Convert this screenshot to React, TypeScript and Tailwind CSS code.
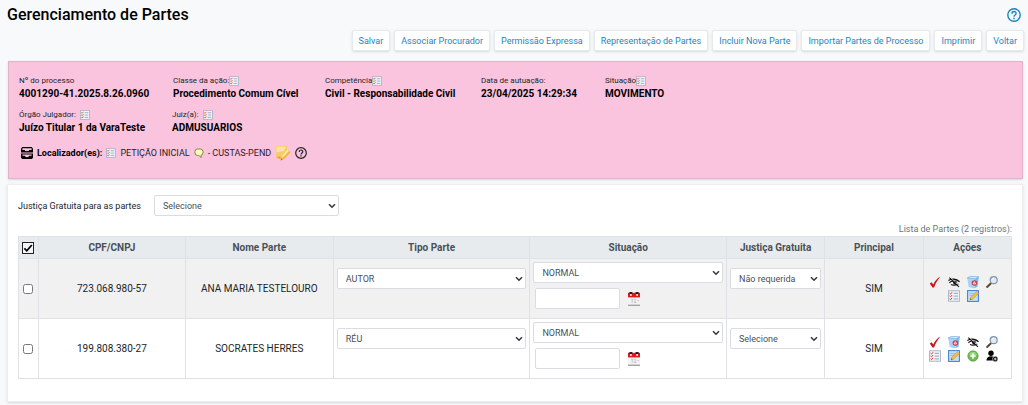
import React, { useState } from "react";

type IconProps = { className?: string };

const ListIcon = ({ className = "size-3" }: IconProps) => (
  <svg viewBox="0 0 12 12" className={className} aria-hidden="true">
    <rect x="0.6" y="0.8" width="10.8" height="10.4" fill="#f3f7fb" stroke="#a4adba" strokeWidth="0.9" />
    <path d="M5.6 3.3h4.4M5.6 6.1h4.4M5.6 8.9h4.4" stroke="#8aa0bd" strokeWidth="1" />
    <path d="M1.6 3.2l1 .9 1.5-1.9M1.6 6l1 .9 1.5-1.9M1.6 8.8l1 .9 1.5-1.9" stroke="#d93a30" strokeWidth="1" fill="none" />
  </svg>
);

const CheckIcon = () => (
  <svg viewBox="0 0 12 12" className="size-3" aria-hidden="true">
    <path d="M.8 7.4 2.6 6.2 4.3 8.4C5.8 5.2 8 2.6 11.4 .6 8.8 3.8 6.6 7.2 5.1 11.4H3.5Z" fill="#cc1419" />
  </svg>
);

const EyeOffIcon = () => (
  <svg viewBox="0 0 12 12" className="size-3" aria-hidden="true">
    <path d="M.4 4.6C3.4 2.4 8.2 2.8 11.6 5.8" fill="none" stroke="#111" strokeWidth="1.3" />
    <path d="M1.4 6.8C3 4.8 6 4.6 9 6.4M3 8.6C5 9.4 8 9.2 10.4 8" fill="none" stroke="#111" strokeWidth="1.1" />
    <path d="M4.6 5.2 8.6 5.6 8 8.4 5.6 8Z" fill="#111" />
    <path d="M1.4 1.6 11 10.8" stroke="#111" strokeWidth="1.1" />
    <path d="M2.4 1.4 11.6 10" stroke="#f4f4f4" strokeWidth="0.5" />
  </svg>
);

const TrashIcon = () => (
  <svg viewBox="0 0 12 12" className="size-3" aria-hidden="true">
    <path d="M.4 1.8 3.4 .5 11.8 .8 10.6 10.6 8 11.9 2 11Z" fill="#7db9ee" />
    <path d="M.4 1.8 8.4 2.8 8 11.9 2 11Z" fill="#a9d3f7" />
    <path d="M.4 1.8 3.4 .5 11.8 .8 8.4 2.8Z" fill="#dff0fd" stroke="#5d9fdb" strokeWidth="0.5" />
    <circle cx="7.4" cy="7" r="2.8" fill="#cf3c4a" />
    <path d="M6.1 7.9 7.4 5.6 8.7 7.9Z" fill="none" stroke="#fff" strokeWidth="0.8" />
  </svg>
);

const SearchIcon = () => (
  <svg viewBox="0 0 12 12" className="size-3" aria-hidden="true">
    <path d="M5 7.2 1.1 10.9" stroke="#5f4636" strokeWidth="2" strokeLinecap="round" />
    <circle cx="7.7" cy="4.2" r="3.5" fill="#dbe9f8" stroke="#8793a5" strokeWidth="1.2" />
    <path d="M6 4A1.8 1.8 0 0 1 7.9 2.3" fill="none" stroke="#fff" strokeWidth="0.9" />
  </svg>
);

const EditIcon = () => (
  <svg viewBox="0 0 12 12" className="size-3" aria-hidden="true">
    <rect x="0.6" y="0.6" width="10.8" height="10.8" fill="#c4defa" stroke="#3f7ccb" strokeWidth="1" />
    <path d="M2.4 3.4h5M2.4 5.4h3.4" stroke="#8bb6e6" strokeWidth="0.8" />
    <path d="M3 9.8 3.6 7.3 9.6 1.4 11.7 3.4 5.6 9.3Z" fill="#f5bc45" stroke="#b8853c" strokeWidth="0.4" />
    <path d="M3 9.8 3.4 8.2 4.6 9.4Z" fill="#444" />
  </svg>
);

const AddIcon = () => (
  <svg viewBox="0 0 12 12" className="size-3" aria-hidden="true">
    <circle cx="6" cy="6" r="5.2" fill="#72bb55" stroke="#559c40" strokeWidth="0.7" />
    <path d="M2 5A4.2 4.2 0 0 1 10 5Z" fill="#9bd583" />
    <path d="M6 3.2v5.6M3.2 6h5.6" stroke="#fff" strokeWidth="1.6" />
  </svg>
);

const PersonAddIcon = () => (
  <svg viewBox="0 0 12 12" className="size-3" aria-hidden="true">
    <circle cx="5" cy="3.2" r="2.7" fill="#000" />
    <path d="M.4 10.5C.4 7.8 2.6 6.3 5 6.3S9 7.6 9.4 10.5Z" fill="#000" />
    <circle cx="9.2" cy="9" r="2.7" fill="#000" stroke="#fff" strokeWidth="0.5" />
    <path d="M9.2 7.6v2.8M7.8 9h2.8" stroke="#fff" strokeWidth="0.8" />
  </svg>
);

const CalendarIcon = () => (
  <svg viewBox="0 0 12 14" className="h-3.5 w-3" aria-hidden="true">
    <path d="M0 5H12V13.4H0Z" fill="#f3f3f3" />
    <path d="M0 12.6H12V14H0Z" fill="#a3a3a3" />
    <path d="M0 .8H12V5.4H0Z" fill="#d91a1d" />
    <path d="M1.4 0h3v2H1.4ZM7.6 0h3v2H7.6Z" fill="#35191a" />
    <path d="M2.2 2.1h1.4v1.9H2.2ZM8.4 2.1h1.4v1.9H8.4Z" fill="#fff" />
    <path d="M3.3 7.2 4.2 6.8V10.8M6 7.4C7.8 6.4 8 8.2 6.2 10.4H8.4M9.6 8.6H11" fill="none" stroke="#b4b4b4" strokeWidth="0.8" />
  </svg>
);

const InboxIcon = () => (
  <svg viewBox="0 0 12 12" className="size-3" aria-hidden="true">
    <path d="M1.4 0H10.6L12 1.4V5.4H0V1.4Z" fill="#000" />
    <path d="M1.4 1.2H10.6V3H8.2C8 4.6 4 4.6 3.8 3H1.4Z" fill="#fac4df" />
    <path d="M0 6.6H12V10.8L10.8 12H1.2L0 10.8Z" fill="#000" />
    <path d="M1.4 7.6H10.6V8.8H8.2C8 10.6 4 10.6 3.8 8.8H1.4Z" fill="#fac4df" />
  </svg>
);

const BalloonIcon = () => (
  <svg viewBox="0 0 10 10" className="size-2.5" aria-hidden="true">
    <path d="M3.4 1H6.6A2.6 2.6 0 0 1 9 3.4V4.8A2.4 2.4 0 0 1 7 7.2L7.2 9.6 4.8 7.4H3.4A2.4 2.4 0 0 1 1 5V3.4A2.4 2.4 0 0 1 3.4 1Z" fill="#fafbb4" stroke="#66702f" strokeWidth="0.8" />
  </svg>
);

const NoteIcon = () => (
  <svg viewBox="0 0 16 16" className="size-4" aria-hidden="true">
    <path d="M.8 1.2 12 .6 12.8 10 5.4 14 1 12.4Z" fill="#f9c96a" />
    <path d="M1.4 1.8 11.4 1.4 9 6 1.6 7.6Z" fill="#fde3a4" />
    <path d="M1 12.4 5.4 11.2 5.4 14Z" fill="#e9a13c" />
    <path d="M5.6 15.6 6.6 11.4 12.4 4.8 15.6 7.2 9.4 13.8Z" fill="#f2b53d" />
    <path d="M6.6 11.4 12.4 4.8 13.8 6 7.8 12.6Z" fill="#fff1b5" />
    <path d="M5.6 15.6 6.2 13.2 7.6 14.6Z" fill="#a47335" />
  </svg>
);

const HelpIcon = ({ className = "" }: IconProps) => (
  <svg viewBox="0 0 14 14" className={className} fill="none" stroke="currentColor" aria-hidden="true">
    <circle cx="7" cy="7" r="6.2" strokeWidth="1.4" />
    <path d="M4.9 5.7C4.9 2.8 9.1 2.9 9.1 5.4 9.1 7 7 7 7 8.7" strokeWidth="1.4" />
    <path d="M7 9.7V11.2" strokeWidth="1.5" />
  </svg>
);

const actions = {
  check: { label: "Selecionar", icon: <CheckIcon /> },
  hide: { label: "Ocultar", icon: <EyeOffIcon /> },
  trash: { label: "Excluir", icon: <TrashIcon /> },
  search: { label: "Consultar", icon: <SearchIcon /> },
  list: { label: "Listar", icon: <ListIcon /> },
  edit: { label: "Editar", icon: <EditIcon /> },
  add: { label: "Adicionar", icon: <AddIcon /> },
  person: { label: "Adicionar pessoa", icon: <PersonAddIcon /> },
};
type ActionKey = keyof typeof actions;

const toolbar = [
  "Salvar",
  "Associar Procurador",
  "Permissão Expressa",
  "Representação de Partes",
  "Incluir Nova Parte",
  "Importar Partes de Processo",
  "Imprimir",
  "Voltar",
];

type Party = {
  doc: string;
  name: string;
  type: string;
  status: string;
  free: string;
  main: string;
  actions: ActionKey[][];
};

const parties: Party[] = [
  {
    doc: "723.068.980-57",
    name: "ANA MARIA TESTELOURO",
    type: "AUTOR",
    status: "NORMAL",
    free: "Não requerida",
    main: "SIM",
    actions: [["check", "hide", "trash", "search"], ["list", "edit"]],
  },
  {
    doc: "199.808.380-27",
    name: "SOCRATES HERRES",
    type: "RÉU",
    status: "NORMAL",
    free: "Selecione",
    main: "SIM",
    actions: [["check", "trash", "hide", "search"], ["list", "edit", "add", "person"]],
  },
];

function SelectBox({ id, label, value, options }: { id: string; label?: string; value: string; options: string[] }) {
  return (
    <div className="relative w-full">
      <select
        id={id}
        aria-label={label}
        defaultValue={value}
        className="block h-[21px] w-full appearance-none rounded-xs border border-[#d9dde2] bg-white pr-5 pl-2 text-[9px] leading-[18px] text-[#495057]"
      >
        {options.map((o) => (
          <option key={o}>{o}</option>
        ))}
      </select>
      <svg viewBox="0 0 8 6" className="pointer-events-none absolute top-2 right-[3px] h-1.5 w-2" aria-hidden="true">
        <path d="M1 1.2 4 4.2 7 1.2" fill="none" stroke="#343a40" strokeWidth="1.6" />
      </svg>
    </div>
  );
}

function Field({ label, value, icon, spaced }: { label: string; value: string; icon?: boolean; spaced?: boolean }) {
  return (
    <div className="whitespace-nowrap">
      <dt className={`flex h-[13px] items-center text-[8px] text-[#212529] ${spaced ? "gap-1" : ""}`}>
        {label}
        {icon && <ListIcon className="size-2.5" />}
      </dt>
      <dd className="h-3.5 text-[10px] leading-[14px] font-bold text-black">{value}</dd>
    </div>
  );
}

const th = "border border-[#dee2e6] p-0 text-center font-bold";
const td = "border border-[#dee2e6] p-0 text-center";

export default function App() {
  const [selected, setSelected] = useState<boolean[]>([false, false]);
  const [all, setAll] = useState(true);

  return (
    <div className="min-h-screen bg-[#f8f9fb] pb-1 font-['Roboto',sans-serif] text-[9px] leading-3 text-[#212529]">
      <header className="flex h-[30px] items-center justify-between px-[7px]">
        <h1 className="text-base font-medium text-black">Gerenciamento de Partes</h1>
        <button type="button" aria-label="Ajuda" className="text-[#1c86c5]">
          <HelpIcon className="size-3.5" />
        </button>
      </header>

      <nav aria-label="Ações" className="flex justify-end gap-1 pr-1">
        {toolbar.map((t) => (
          <button
            key={t}
            type="button"
            className="h-[21px] rounded-xs border border-[#e6e9ed] bg-white px-1.5 whitespace-nowrap text-[#1a86c4] shadow-sm"
          >
            {t}
          </button>
        ))}
      </nav>

      <section className="mt-2.5 mr-[5px] ml-2 h-[118px] border border-[#dfb3c8] bg-[#fac4df] px-2.5 pt-3 shadow-sm">
        <dl className="grid grid-cols-[154fr_152fr_156fr_124fr_407fr]">
          <Field label="Nº do processo" value="4001290-41.2025.8.26.0960" />
          <Field label="Classe da ação:" value="Procedimento Comum Cível" icon />
          <Field label="Competência" value="Civil - Responsabilidade Civil" icon />
          <Field label="Data de autuação:" value="23/04/2025 14:29:34" />
          <Field label="Situação" value="MOVIMENTO" icon />
        </dl>
        <dl className="mt-[7px] grid grid-cols-[153fr_840fr]">
          <Field label="Órgão Julgador:" value="Juízo Titular 1 da VaraTeste" icon spaced />
          <Field label="Juiz(a):" value="ADMUSUARIOS" icon spaced />
        </dl>
        <div className="mt-2.5 flex h-4 items-center gap-1 pl-0.5">
          <InboxIcon />
          <span className="font-bold text-black">Localizador(es):</span>
          <ListIcon className="size-2.5" />
          <span>PETIÇÃO INICIAL</span>
          <BalloonIcon />
          <span>- CUSTAS-PEND</span>
          <NoteIcon />
          <HelpIcon className="size-3" />
        </div>
      </section>

      <main className="mt-[5px] mr-[5px] ml-[7px] border border-[#eceef0] bg-white px-2.5 pt-2.5 pb-[22px] shadow-sm">
        <div className="flex items-center">
          <label htmlFor="justica" className="w-[136px]">
            Justiça Gratuita para as partes
          </label>
          <div className="w-[185px]">
            <SelectBox id="justica" value="Selecione" options={["Selecione", "Requerida", "Não requerida"]} />
          </div>
        </div>

        <table className="mt-[7px] w-full table-fixed border-collapse text-[10px]">
          <caption className="h-[13px] text-right text-[9px] text-[#6c757d]">Lista de Partes (2 registros):</caption>
          <colgroup>
            <col className="w-[2%]" />
            <col className="w-[14.8%]" />
            <col className="w-[14.9%]" />
            <col className="w-[19.8%]" />
            <col className="w-[19.8%]" />
            <col className="w-[9.9%]" />
            <col className="w-[9.9%]" />
            <col className="w-[8.9%]" />
          </colgroup>
          <thead>
            <tr className="h-[22px] bg-[#e8ebee] text-[#495057]">
              <th className={th}>
                <div className="relative mx-auto size-3">
                  <input
                    type="checkbox"
                    aria-label="Selecionar todos"
                    checked={all}
                    onChange={(e) => setAll(e.target.checked)}
                    className="peer block size-3 appearance-none border border-[#222] bg-[#f4f5f6]"
                  />
                  <svg
                    viewBox="0 0 12 12"
                    className="pointer-events-none absolute inset-0 hidden size-3 peer-checked:block"
                    aria-hidden="true"
                  >
                    <path d="M2.4 6.4 4.8 8.8 9.8 3" fill="none" stroke="#000" strokeWidth="1.8" />
                  </svg>
                </div>
              </th>
              <th className={th}>CPF/CNPJ</th>
              <th className={th}>Nome Parte</th>
              <th className={th}>Tipo Parte</th>
              <th className={th}>Situação</th>
              <th className={th}>Justiça Gratuita</th>
              <th className={th}>Principal</th>
              <th className={th}>Ações</th>
            </tr>
          </thead>
          <tbody>
            {parties.map((p, i) => (
              <tr key={p.doc} className="h-[60px] odd:bg-[#f1f1f1]">
                <td className={td}>
                  <input
                    type="checkbox"
                    aria-label={`Selecionar ${p.name}`}
                    checked={selected[i]}
                    onChange={() => setSelected(selected.map((s, j) => (j === i ? !s : s)))}
                    className="mx-auto block size-2.5"
                  />
                </td>
                <td className={td}>{p.doc}</td>
                <td className={td}>{p.name}</td>
                <td className={`${td} px-[3px] pt-[9px] align-top`}>
                  <SelectBox id={`tipo-${i}`} label="Tipo Parte" value={p.type} options={["AUTOR", "RÉU"]} />
                </td>
                <td className={`${td} px-[3px] pt-[3px] align-top`}>
                  <SelectBox id={`sit-${i}`} label="Situação" value={p.status} options={["NORMAL"]} />
                  <div className="mt-[5px] flex items-center gap-2 pl-0.5">
                    <input
                      type="text"
                      aria-label="Data da situação"
                      className="h-[21px] w-[85px] rounded-xs border border-[#d9dde2] bg-white px-1"
                    />
                    <button type="button" aria-label="Abrir calendário">
                      <CalendarIcon />
                    </button>
                  </div>
                </td>
                <td className={`${td} px-[3px] pt-[9px] align-top`}>
                  <SelectBox
                    id={`jg-${i}`}
                    label="Justiça Gratuita"
                    value={p.free}
                    options={["Selecione", "Requerida", "Não requerida"]}
                  />
                </td>
                <td className={td}>{p.main}</td>
                <td className={`${td} pr-2`}>
                  <div className="flex flex-col gap-0.5">
                    {p.actions.map((row, r) => (
                      <div key={r} className="flex justify-center gap-[7px]">
                        {row.map((a) => (
                          <button key={a} type="button" aria-label={actions[a].label}>
                            {actions[a].icon}
                          </button>
                        ))}
                      </div>
                    ))}
                  </div>
                </td>
              </tr>
            ))}
          </tbody>
        </table>
      </main>
    </div>
  );
}
